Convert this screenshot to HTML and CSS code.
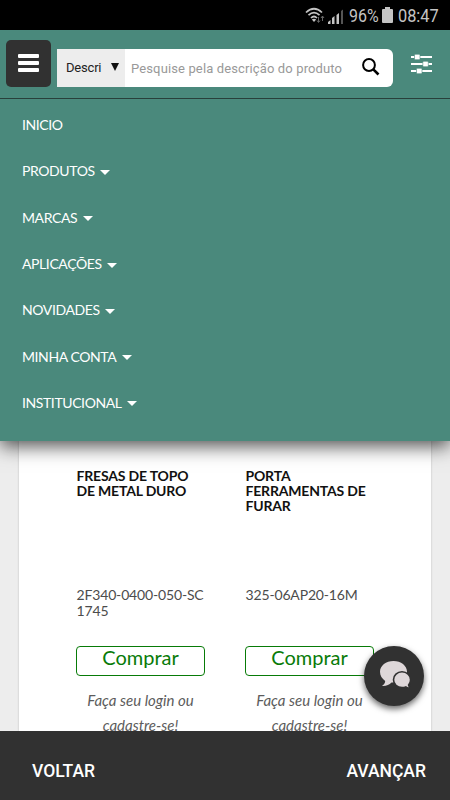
FILE: index.html
```html
<!DOCTYPE html>
<html lang="pt-BR">
<head>
<meta charset="utf-8">
<meta name="viewport" content="width=device-width">
<title>Produtos</title>
<link rel="stylesheet" href="styles.css">
</head>
<body>
<div class="screen">
  <div class="status">
    <svg class="signals" width="40" height="20" viewBox="0 0 40 20">
      <g fill="none" stroke="#c4c4c4" stroke-width="1.7">
        <path d="M1 6.500Q9 -1 17 6.500M3.500 9.200Q9 4 14.500 9.200M6 12Q9 9 12 12"/>
      </g>
      <path d="M6.800 13.500L9 16l2.200-2.500Q9 12 6.800 13.500z" fill="#c4c4c4"/>
      <path d="M13.500 11v5M12 14.500l1.500 2 1.500-2M17.500 15v-5M16 12l1.500-2 1.500 2" fill="none" stroke="#666"/>
      <path d="M23 18v-2l2.500-2v4zM27 18v-6l2.500-2v8zM31.500 18V9l2.500-2v11z" fill="#c4c4c4"/>
      <path d="M36 18V5l2-1.500V18z" fill="#555"/>
    </svg>
    <span class="percent">96%</span>
    <svg class="battery" width="11" height="16" viewBox="0 0 11 16"><path d="M3 0h5v2h2q1 0 1 1v12q0 1-1 1H1q-1 0-1-1V3q0-1 1-1h2z" fill="#c4c4c4"/></svg>
    <span class="clock">08:47</span>
  </div>
  <header class="topbar">
    <button class="burger" aria-label="Menu"><i></i><i></i><i></i></button>
    <div class="search">
      <div class="field"><span>Descri</span><svg width="8" height="8" viewBox="0 0 8 8"><path d="M0 0h8L4 8z" fill="#111"/></svg></div>
      <span class="hint">Pesquise pela descrição do produto</span>
      <svg class="lens" width="18" height="18" viewBox="0 0 18 18"><circle cx="7" cy="7" r="5.900" fill="none" stroke="#000" stroke-width="2"/><path d="M11.300 11.300L16.500 16.500" stroke="#000" stroke-width="2.600"/></svg>
    </div>
    <svg class="sliders" width="21" height="20" viewBox="0 0 21 20" fill="#fff"><path d="M0 2h21v2H0zM0 9h21v2H0zM0 16h21v2H0z"/><g stroke="#4a897c" stroke-width=".6"><rect x="3.500" y=".3" width="5.500" height="5.400" rx="1"/><rect x="11.800" y="7.300" width="5.500" height="5.400" rx="1"/><rect x="5.500" y="14.300" width="5.500" height="5.400" rx="1"/></g></svg>
  </header>
  <nav class="menu">
    <a>INICIO</a>
    <a class="more">PRODUTOS</a>
    <a class="more">MARCAS</a>
    <a class="more">APLICAÇÕES</a>
    <a class="more">NOVIDADES</a>
    <a class="more">MINHA CONTA</a>
    <a class="more">INSTITUCIONAL</a>
  </nav>
  <main class="content">
    <div class="sheet">
      <article class="product">
        <h2>FRESAS DE TOPO<br>DE METAL DURO</h2>
        <p class="code">2F340-0400-050-SC<br>1745</p>
        <button class="buy">Comprar</button>
        <p class="login">Faça seu login ou<br>cadastre-se!</p>
      </article>
      <article class="product">
        <h2>PORTA<br>FERRAMENTAS DE<br>FURAR</h2>
        <p class="code">325-06AP20-16M</p>
        <button class="buy">Comprar</button>
        <p class="login">Faça seu login ou<br>cadastre-se!</p>
      </article>
    </div>
    <div class="chat">
      <svg width="31" height="28" viewBox="0 0 31 28" fill="#ded7d9"><path d="M13.500 0C6 0 0 4.700 0 10.800c0 3.800 2 7 5.200 9.200-.2 2.500-1.500 3.800-3.200 5 4 .3 7.300-1 9.500-3.500 9.500 1 15.500-4.300 15.500-10.700C27 4.700 21 0 13.500 0z"/><path d="M22 10.800c-4.800 0-8.500 3.500-8.500 7.900s3.700 7.900 8.500 7.900c1.400 0 2.700-.2 3.800-.7 1.400 1 3 1.500 4.700 1.400-1-1-1.700-2-1.900-3.200 1.300-1.500 2-3.300 2-5.400 0-4.400-3.800-7.900-8.600-7.900z" stroke="#313131" stroke-width="1.600"/></svg>
    </div>
  </main>
  <footer class="bottom"><span class="back">VOLTAR</span><span class="next">AVANÇAR</span></footer>
</div>
</body>
</html>
```

FILE: styles.css
```css
* { box-sizing: border-box; }
body { margin: 0; font-family: Lato, sans-serif; }
p, h2 { margin: 0; }
svg { display: block; flex: none; }
.screen { width: 450px; height: 800px; display: flex; flex-direction: column; overflow: hidden; }
.status { height: 30px; flex: none; background: #000; color: #c4c4c4; display: flex; align-items: center; padding-left: 305px; font: 19px/30px Roboto, sans-serif; white-space: nowrap; position: relative; z-index: 2; }
.signals { margin-top: 1px; }
.percent, .clock { display: block; transform: scaleX(.84); transform-origin: left; margin-top: 1px; }
.percent { width: 30px; margin-left: 4px; }
.battery { margin-left: 3px; }
.clock { width: 42px; margin-left: 5px; transform: scaleX(.86); }
.topbar { height: 69px; flex: none; background: #4a897c; border-bottom: 1px solid #293f3b; display: flex; align-items: flex-start; padding: 10px 0 0 6px; position: relative; z-index: 2; }
.burger { width: 45px; height: 47px; border: 0; border-radius: 5px; background: #313131; padding: 0 0 2px; display: flex; flex-direction: column; align-items: center; justify-content: center; gap: 3px; }
.burger i { width: 21px; height: 4px; border-radius: 1px; background: #fff; }
.search { width: 336px; height: 38px; margin: 9px 0 0 6px; background: #fff; border-radius: 0 6px 6px 0; overflow: hidden; display: flex; align-items: center; font: 13px Roboto, sans-serif; white-space: nowrap; }
.field { width: 68px; height: 38px; background: #ededed; color: #222; display: flex; align-items: center; justify-content: space-between; padding: 0 6px 2px 9px; }
.field span { letter-spacing: -.2px; }
.hint { width: 212px; margin-left: 6px; color: #999; letter-spacing: .13px; }
.lens { margin: -3px 0 0 19px; }
.sliders { margin: 14px 0 0 18px; }
.menu { height: 342px; flex: none; background: #4a897c; padding: 2.500px 22px 0; position: relative; z-index: 1; box-shadow: 0 5px 18px rgba(0, 0, 0, .7); }
.menu a { display: flex; align-items: center; height: 46.300px; color: #fff; font-size: 14px; letter-spacing: -.4px; }
.more::after { content: ""; border: 5.500px solid transparent; border-top: 5.500px solid #fff; border-bottom: 0; margin: 3px 0 0 5.500px; }
.content { height: 290px; flex: none; background: #ededed; padding: 0 19px; position: relative; overflow: hidden; }
.sheet { height: 290px; background: #fff; box-shadow: 0 0 2px #bbb; display: flex; gap: 40px; padding: 27px 0 0 57px; }
.product { width: 129px; flex: none; }
.product h2 { height: 119px; padding-left: .5px; font-size: 14px; line-height: 15px; font-weight: 700; letter-spacing: -.18px; color: #111; white-space: nowrap; }
.code { height: 59px; padding-left: .5px; font-size: 14px; line-height: 16px; letter-spacing: -.16px; color: #4c4c4c; white-space: nowrap; }
.buy { display: block; width: 129px; height: 30px; border: 1px solid #087b08; border-radius: 4px; background: #fff; color: #087b08; padding: 0 0 8px; font: 20px/20px Lato, sans-serif; }
.login { margin-top: 12px; text-align: center; font-style: italic; font-size: 15px; line-height: 25px; color: #5c5c5c; white-space: nowrap; }
.chat { position: absolute; left: 364px; top: 205px; width: 60px; height: 60px; border-radius: 50%; background: #313131; box-shadow: 0 3px 6px rgba(0, 0, 0, .6); display: flex; align-items: center; justify-content: center; padding: 0 0 3px 2px; }
.bottom { height: 69px; flex: none; background: #313131; color: #fff; display: flex; align-items: center; justify-content: space-between; padding: 10px 24px 0 32px; font: 500 17.500px Roboto, sans-serif; }
```
